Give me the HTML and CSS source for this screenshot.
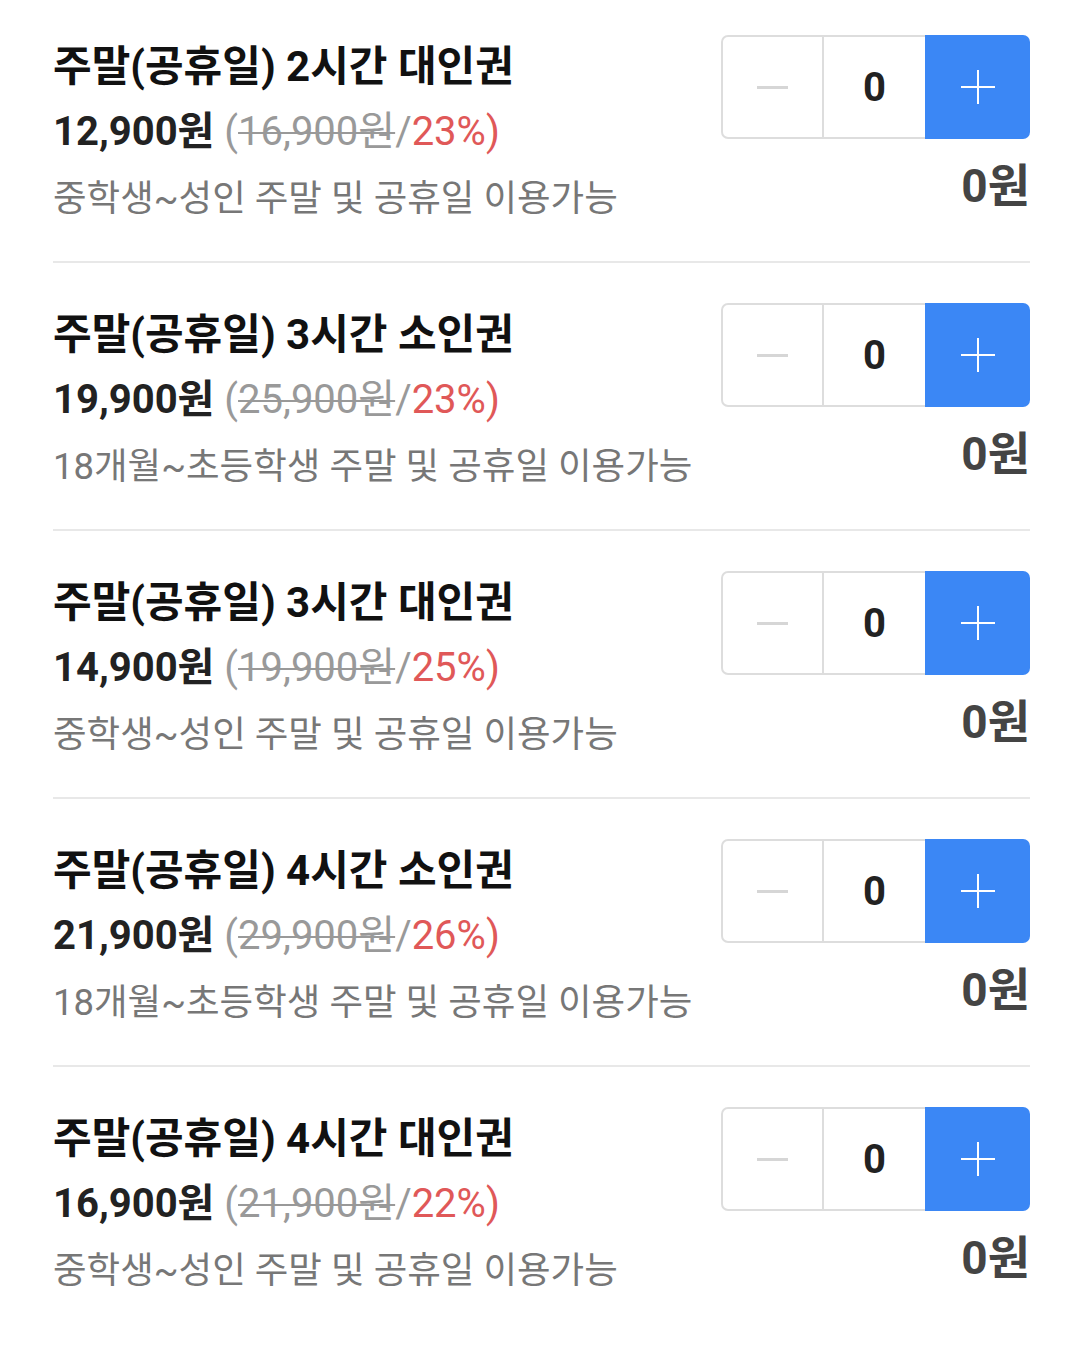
FILE: index.html
```html
<!DOCTYPE html>
<html lang="ko">
<head>
  <meta charset="UTF-8">
  <title>주말 이용권</title>
  <link rel="stylesheet" href="styles.css">
</head>
<body>

  <div class="ticket-list">

    <div class="ticket">
      <div class="info">
        <div class="name">주말(공휴일) 2시간 대인권</div>
        <div class="price">12,900원 <span class="orig">(<s>16,900원</s>/<span class="rate">23%)</span></span></div>
        <div class="desc">중학생~성인 주말 및 공휴일 이용가능</div>
      </div>
      <div class="order">
        <div class="stepper">
          <button class="minus"><span class="bar"></span></button>
          <div class="qty">0</div>
          <button class="plus"><span class="bar"></span><span class="bar vert"></span></button>
        </div>
        <div class="total">0원</div>
      </div>
    </div>

    <div class="ticket">
      <div class="info">
        <div class="name">주말(공휴일) 3시간 소인권</div>
        <div class="price">19,900원 <span class="orig">(<s>25,900원</s>/<span class="rate">23%)</span></span></div>
        <div class="desc">18개월~초등학생 주말 및 공휴일 이용가능</div>
      </div>
      <div class="order">
        <div class="stepper">
          <button class="minus"><span class="bar"></span></button>
          <div class="qty">0</div>
          <button class="plus"><span class="bar"></span><span class="bar vert"></span></button>
        </div>
        <div class="total">0원</div>
      </div>
    </div>

    <div class="ticket">
      <div class="info">
        <div class="name">주말(공휴일) 3시간 대인권</div>
        <div class="price">14,900원 <span class="orig">(<s>19,900원</s>/<span class="rate">25%)</span></span></div>
        <div class="desc">중학생~성인 주말 및 공휴일 이용가능</div>
      </div>
      <div class="order">
        <div class="stepper">
          <button class="minus"><span class="bar"></span></button>
          <div class="qty">0</div>
          <button class="plus"><span class="bar"></span><span class="bar vert"></span></button>
        </div>
        <div class="total">0원</div>
      </div>
    </div>

    <div class="ticket">
      <div class="info">
        <div class="name">주말(공휴일) 4시간 소인권</div>
        <div class="price">21,900원 <span class="orig">(<s>29,900원</s>/<span class="rate">26%)</span></span></div>
        <div class="desc">18개월~초등학생 주말 및 공휴일 이용가능</div>
      </div>
      <div class="order">
        <div class="stepper">
          <button class="minus"><span class="bar"></span></button>
          <div class="qty">0</div>
          <button class="plus"><span class="bar"></span><span class="bar vert"></span></button>
        </div>
        <div class="total">0원</div>
      </div>
    </div>

    <div class="ticket">
      <div class="info">
        <div class="name">주말(공휴일) 4시간 대인권</div>
        <div class="price">16,900원 <span class="orig">(<s>21,900원</s>/<span class="rate">22%)</span></span></div>
        <div class="desc">중학생~성인 주말 및 공휴일 이용가능</div>
      </div>
      <div class="order">
        <div class="stepper">
          <button class="minus"><span class="bar"></span></button>
          <div class="qty">0</div>
          <button class="plus"><span class="bar"></span><span class="bar vert"></span></button>
        </div>
        <div class="total">0원</div>
      </div>
    </div>

  </div>

</body>
</html>
```

FILE: styles.css
```css
body {
  margin: 0;
  background: #fff;
  font-family: Roboto, "Noto Sans CJK KR", sans-serif;
  color: #222;
}
.ticket-list {
  margin: -5px 50px 0 53px;
}
.ticket {
  display: flex;
  justify-content: space-between;
  height: 268px;
  padding-top: 40px;
  box-sizing: border-box;
  border-bottom: 2px solid #e8e8e8;
}
.ticket:last-child {
  border-bottom: none;
}
.info {
  min-width: 0;
  padding-top: 2px;
}
.name {
  font-size: 42px;
  font-weight: 700;
  line-height: 60px;
  color: #111;
  white-space: nowrap;
}
.price {
  font-size: 40px;
  font-weight: 700;
  line-height: 70px;
  color: #222;
  white-space: nowrap;
}
.orig {
  font-weight: 400;
  color: #999;
}
.orig s {
  text-decoration-thickness: 2px;
}
.rate {
  color: #e05858;
}
.desc {
  font-size: 36.5px;
  line-height: 64px;
  color: #777;
  white-space: nowrap;
}
.order {
  display: flex;
  flex-direction: column;
  align-items: flex-end;
}
.stepper {
  display: flex;
  width: 309px;
  height: 104px;
}
.stepper button {
  border: none;
  padding: 0;
  margin: 0;
  position: relative;
  display: flex;
  align-items: center;
  justify-content: center;
  cursor: pointer;
}
.minus {
  width: 103px;
  background: #fff;
  border: 2px solid #ddd !important;
  border-radius: 7px 0 0 7px;
  box-sizing: border-box;
}
.minus .bar {
  display: block;
  width: 31px;
  height: 3px;
  background: #d6d6d6;
}
.qty {
  width: 101px;
  border-top: 2px solid #ddd;
  border-bottom: 2px solid #ddd;
  box-sizing: border-box;
  display: flex;
  align-items: center;
  justify-content: center;
  font-size: 40px;
  font-weight: 700;
  color: #222;
}
.plus {
  width: 105px;
  background: #3b87f5;
  border-radius: 0 7px 7px 0;
}
.plus .bar {
  position: absolute;
  width: 34px;
  height: 2px;
  background: #fff;
}
.plus .bar.vert {
  width: 2px;
  height: 34px;
}
.total {
  margin-top: 17px;
  font-size: 46px;
  font-weight: 700;
  line-height: 60px;
  color: #444;
}
```
